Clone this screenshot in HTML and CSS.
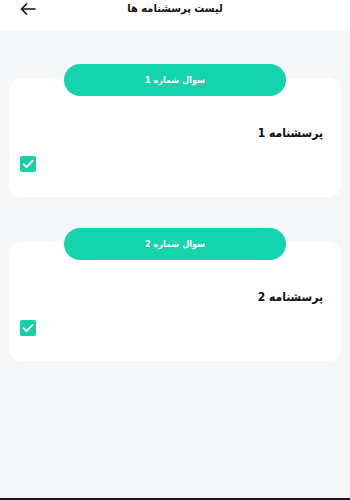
FILE: index.html
```html
<!DOCTYPE html>
<html lang="fa">
<head>
<meta charset="utf-8">
<link rel="stylesheet" href="styles.css">
</head>
<body>
<div class="app">
  <header class="topbar">
    <span class="back">
      <svg width="16" height="12" viewBox="0 0 16 12"><path d="M15 6H1.5M6.5 1L1.5 6l5 5" fill="none" stroke="#111" stroke-width="1.7" stroke-linecap="round" stroke-linejoin="round"/></svg>
    </span>
    <h1 class="title" dir="rtl">لیست پرسشنامه ها</h1>
  </header>
  <main class="list">
    <section class="item">
      <div class="pill" dir="rtl">سوال شماره 1</div>
      <div class="card">
        <div class="card-title" dir="rtl">پرسشنامه 1</div>
        <span class="check">
          <svg width="12" height="10" viewBox="0 0 12 10"><path d="M1.5 5.2l3 3 6-6.4" fill="none" stroke="#fff" stroke-width="1.9" stroke-linecap="round" stroke-linejoin="round"/></svg>
        </span>
      </div>
    </section>
    <section class="item">
      <div class="pill" dir="rtl">سوال شماره 2</div>
      <div class="card">
        <div class="card-title" dir="rtl">پرسشنامه 2</div>
        <span class="check">
          <svg width="12" height="10" viewBox="0 0 12 10"><path d="M1.5 5.2l3 3 6-6.4" fill="none" stroke="#fff" stroke-width="1.9" stroke-linecap="round" stroke-linejoin="round"/></svg>
        </span>
      </div>
    </section>
  </main>
  <div class="bottom-edge"></div>
</div>
</body>
</html>
```
FILE: styles.css
```css
* { box-sizing: border-box; }
html, body { margin: 0; padding: 0; }
body {
  font-family: "DejaVu Sans Condensed", "DejaVu Sans", sans-serif;
  background: #f5f6f8;
  color: #111;
}
.app {
  width: 350px;
  height: 500px;
  display: flex;
  flex-direction: column;
}
.topbar {
  height: 31px;
  background: #fff;
  display: grid;
  grid-template-columns: 20px 16px 1fr 36px;
  align-items: start;
  flex: none;
}
.back {
  grid-column: 2;
  display: flex;
  padding-top: 3px;
}
.title {
  grid-column: 3;
  margin: 0;
  padding-top: 1px;
  text-align: center;
  font-size: 11px;
  font-weight: 700;
  line-height: 16px;
}
.list {
  flex: 1;
  padding: 33px 9px 0;
  display: flex;
  flex-direction: column;
  gap: 31px;
}
.item {
  display: flex;
  flex-direction: column;
  align-items: center;
}
.pill {
  position: relative;
  z-index: 1;
  width: 222px;
  height: 32px;
  border-radius: 16px;
  background: #14d4ad;
  color: #fff;
  font-size: 9px;
  font-weight: 700;
  display: flex;
  align-items: center;
  justify-content: center;
}
.card {
  align-self: stretch;
  margin-top: -18px;
  height: 119px;
  background: #fff;
  border-radius: 12px;
  padding: 45px 18px 0 11px;
  display: flex;
  flex-direction: column;
}
.card-title {
  text-align: right;
  font-size: 12px;
  font-weight: 700;
  line-height: 20px;
}
.check {
  margin-top: 13px;
  width: 16px;
  height: 16px;
  border-radius: 2px;
  background: #14d0aa;
  display: flex;
  align-items: center;
  justify-content: center;
}
.bottom-edge {
  height: 2px;
  background: #1a1a1a;
  flex: none;
}
```
